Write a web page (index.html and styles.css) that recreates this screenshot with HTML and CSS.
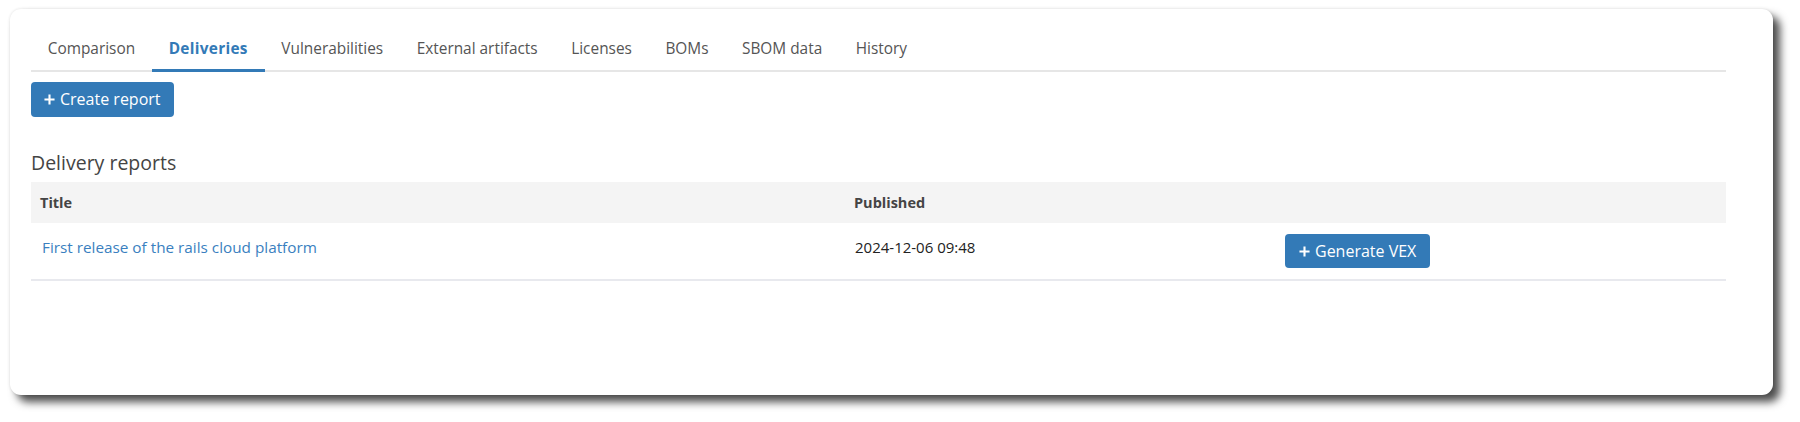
FILE: index.html
```html
<!DOCTYPE html>
<html>
  <head>
    <title>Deliveries</title>
    <link rel="stylesheet" href="styles.css">
  </head>
  <body>

    <div class="card">

      <ul class="tabs">
        <li class="tab">Comparison</li>
        <li class="tab active">Deliveries</li>
        <li class="tab">Vulnerabilities</li>
        <li class="tab">External artifacts</li>
        <li class="tab">Licenses</li>
        <li class="tab">BOMs</li>
        <li class="tab">SBOM data</li>
        <li class="tab">History</li>
      </ul>

      <button class="btn">
        <svg class="plus" viewBox="0 0 12 12"><path d="M6 0.5V11.5M0.5 6H11.5"/></svg>
        Create report
      </button>

      <h2>Delivery reports</h2>

      <table class="reports">
        <thead>
          <tr>
            <th class="col-title">Title</th>
            <th class="col-published">Published</th>
            <th></th>
          </tr>
        </thead>
        <tbody>
          <tr>
            <td><a href="#">First release of the rails cloud platform</a></td>
            <td class="date">2024-12-06 09:48</td>
            <td class="actions">
              <button class="btn">
                <svg class="plus" viewBox="0 0 12 12"><path d="M6 0.5V11.5M0.5 6H11.5"/></svg>
                Generate VEX
              </button>
            </td>
          </tr>
        </tbody>
      </table>

    </div>

  </body>
</html>
```

FILE: styles.css
```css
*,
*:before,
*:after {
  box-sizing: border-box;
}
html,
body {
  margin: 0px;
  padding: 0px;
  background: #fff;
  font-family: "Open Sans", sans-serif;
  color: #333;
}

body {
  min-height: 422px;
  padding: 9px 0 0 10px;
}

.card {
  width: 1763px;
  height: 386px;
  padding: 18px 47px 0 21px;
  background: #fff;
  border-radius: 11px;
  box-shadow: 7px 7px 9px rgba(0, 0, 0, 0.7), 0 0 3px rgba(0, 0, 0, 0.12);
}

.tabs {
  display: flex;
  margin: 0;
  padding: 0;
  list-style: none;
  border-bottom: 2px solid #e6e6e6;
}

.tab {
  padding: 12px 16.75px 10px;
  margin-bottom: -2px;
  font-size: 15.4px;
  line-height: 20px;
  color: #555;
  border-bottom: 3px solid transparent;
}

.tab.active {
  color: #337ab7;
  font-weight: bold;
  letter-spacing: 0.3px;
  border-bottom-color: #337ab7;
}

.btn {
  display: inline-flex;
  align-items: center;
  gap: 5px;
  height: 35px;
  padding: 0 13px;
  border: 0;
  border-radius: 4px;
  background: #337ab7;
  color: #fff;
  font-family: "Open Sans", sans-serif;
  font-size: 16px;
  line-height: 35px;
}

.plus {
  width: 11px;
  height: 11px;
  fill: none;
  stroke: #fff;
  stroke-width: 2.3;
}

.tabs + .btn {
  margin-top: 10px;
}

h2 {
  margin: 33px 0 6px;
  font-size: 19.5px;
  line-height: 26px;
  font-weight: normal;
  color: #444;
}

.reports {
  width: 100%;
  border-collapse: collapse;
}

.reports th {
  padding: 10px 9px;
  background: #f4f4f4;
  font-size: 14.5px;
  line-height: 21px;
  text-align: left;
  color: #444;
}

.col-title {
  width: 814px;
}

.col-published {
  width: 431px;
}

.reports td {
  padding: 14px 9px 0;
  height: 57px;
  vertical-align: top;
  font-size: 15.3px;
  line-height: 20px;
  border-bottom: 2px solid #e8e9ee;
}

.reports td.actions {
  padding-top: 11px;
}

.reports td.actions .btn {
  height: 34px;
  line-height: 34px;
  padding: 0 14px;
}

.reports a {
  color: #3a7fc0;
  text-decoration: none;
  padding-left: 2px;
}

.reports td.date {
  color: #222;
  font-size: 15px;
  padding-left: 10px;
}
```
